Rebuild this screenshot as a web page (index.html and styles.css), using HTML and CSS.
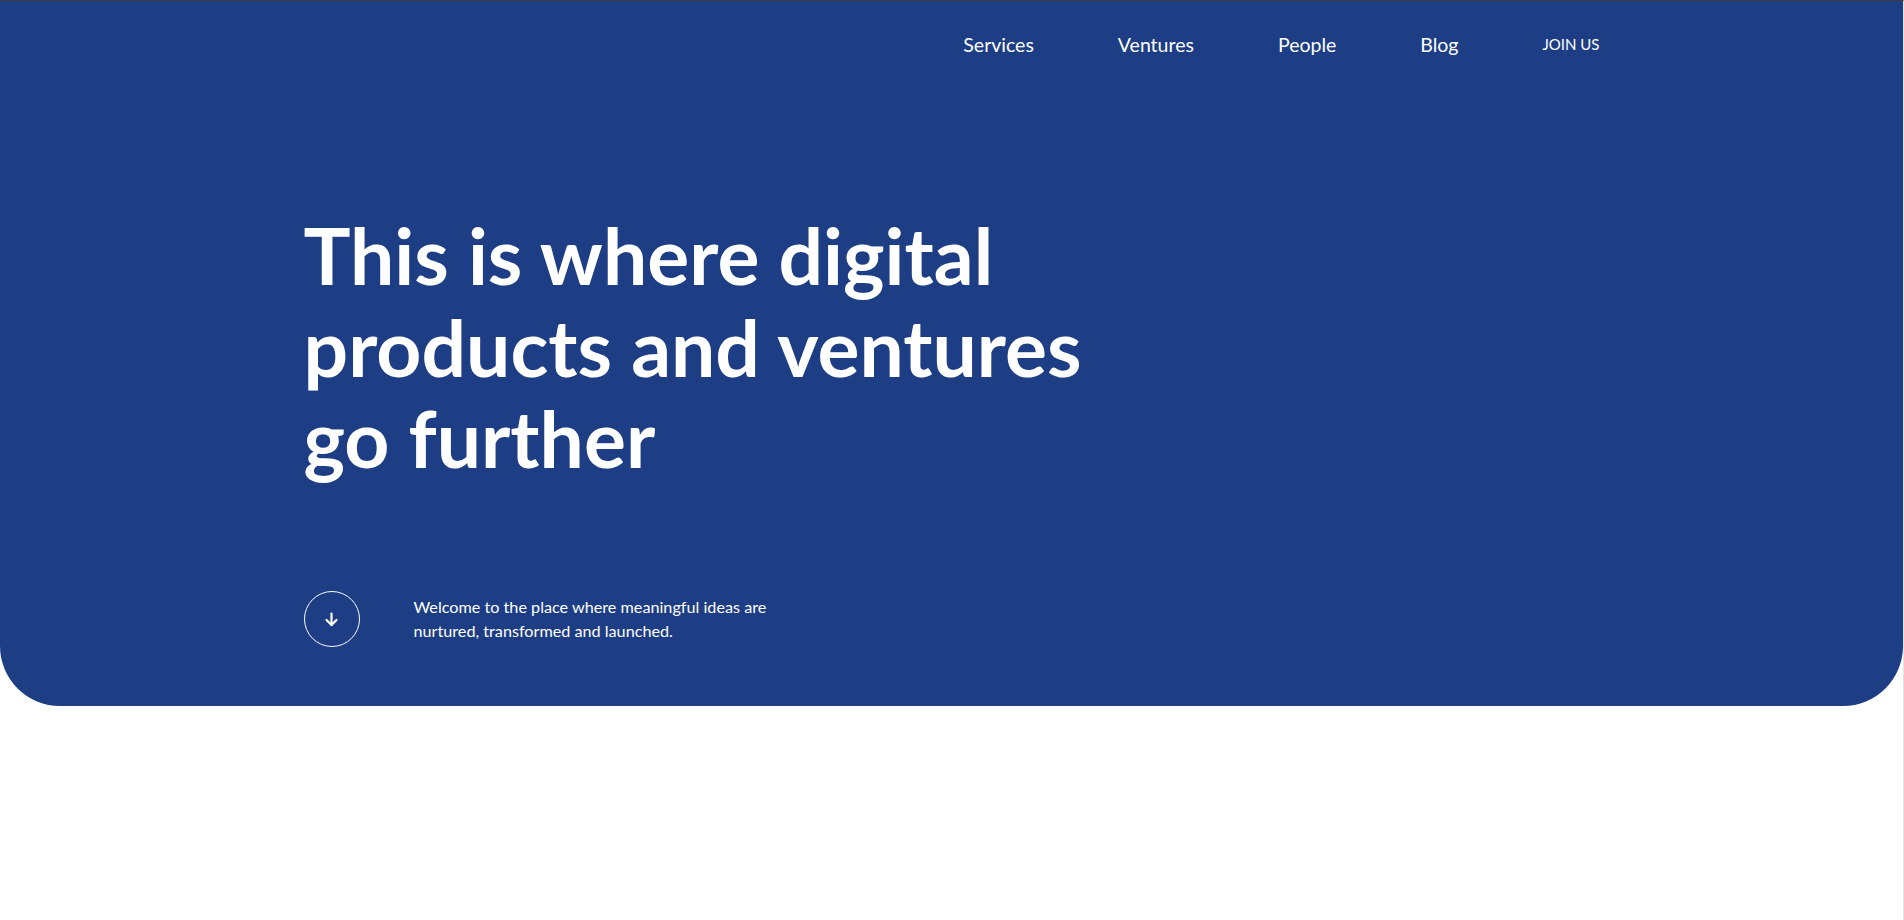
FILE: index.html
```html
<!DOCTYPE html>
<html lang="en">
<head>
<meta charset="utf-8">
<title>This is where digital products and ventures go further</title>
<link rel="stylesheet" href="styles.css">
</head>
<body>
<div class="page">
  <section class="hero">
    <div class="container">
      <nav class="nav">
        <a class="nav-link" href="#">Services</a>
        <a class="nav-link" href="#">Ventures</a>
        <a class="nav-link" href="#">People</a>
        <a class="nav-link" href="#">Blog</a>
        <a class="nav-link nav-join" href="#">JOIN US</a>
      </nav>
      <h1 class="title">This is where digital<br>products and ventures<br>go further</h1>
      <div class="intro">
        <a class="scroll-btn" href="#" aria-label="Scroll down">
          <svg width="15" height="15" viewBox="0 0 15 15" fill="none" stroke="#fff" stroke-width="2.2" stroke-linecap="round" stroke-linejoin="round">
            <path d="M7.5 1.5V13"/>
            <path d="M2.5 8L7.5 13L12.5 8"/>
          </svg>
        </a>
        <p class="intro-text">Welcome to the place where meaningful ideas are nurtured, transformed and launched.</p>
      </div>
    </div>
  </section>
</div>
</body>
</html>
```
FILE: styles.css
```css
* { box-sizing: border-box; }
html, body { margin: 0; padding: 0; background: #fff; }
body { font-family: "Lato", "Noto Sans", sans-serif; color: #fff; }

.page {
  min-height: 920px;
  border-top: 1px solid #3f3f3f;
  border-right: 1px solid #e2e2e2;
}

.hero {
  background: #1d3d84;
  border-radius: 0 0 60px 60px;
  padding-bottom: 59px;
}

.container {
  width: 1300px;
  margin: 0 auto;
  padding: 0 2px;
}

.nav {
  display: flex;
  justify-content: flex-end;
  align-items: center;
  gap: 84px;
  padding-top: 32px;
  height: 56px;
}

.nav-link {
  color: #fff;
  text-decoration: none;
  font-size: 19.5px;
  line-height: 24px;
}

.nav-join {
  font-size: 15px;
  margin-top: -2px;
}

.title {
  margin: 152px 0 0;
  font-size: 78.6px;
  font-weight: 700;
  line-height: 91.5px;
  letter-spacing: 0;
}

.intro {
  display: flex;
  align-items: center;
  gap: 54px;
  margin-top: 107.5px;
}

.scroll-btn {
  width: 56px;
  height: 56px;
  border: 1px solid #fff;
  border-radius: 50%;
  display: flex;
  align-items: center;
  justify-content: center;
  flex: none;
}

.intro-text {
  margin: 0;
  width: 370px;
  font-size: 16.2px;
  line-height: 24px;
}
```
